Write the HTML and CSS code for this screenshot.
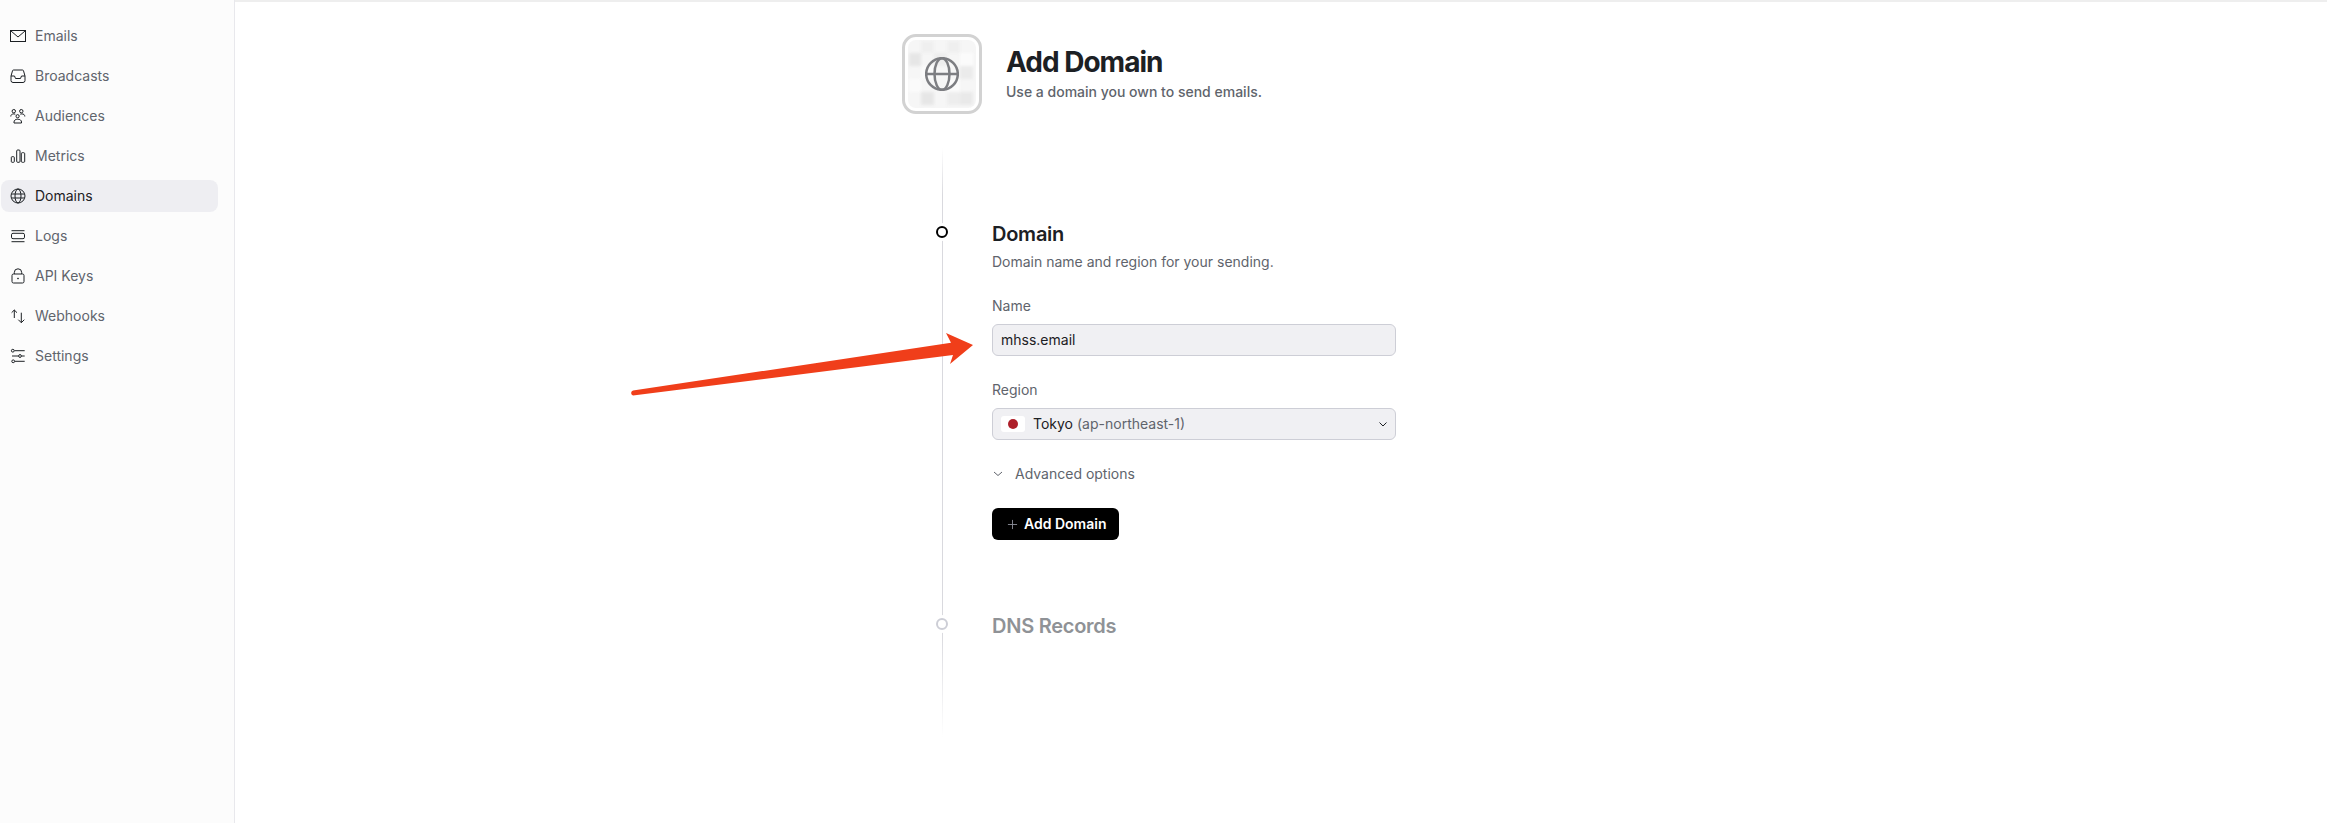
FILE: index.html
```html
<!DOCTYPE html>
<html lang="en">
<head>
<meta charset="utf-8">
<title>Add Domain</title>
<link rel="stylesheet" href="styles.css">
</head>
<body>
<div class="app">
  <aside class="sidebar">
    <nav class="nav">
      <a class="nav-item"><svg class="nav-icon" viewBox="0 0 16 16"><rect x=".5" y="2.500" width="15" height="11"/><path d="M1 3l7 6 7-6"/></svg>Emails</a>
      <a class="nav-item"><svg class="nav-icon" viewBox="0 0 16 16"><path d="M3.500 2h9a1 1 0 0 1 1 .8L15 8v4.500a2 2 0 0 1-2 2H3a2 2 0 0 1-2-2V8l1.500-5.200a1 1 0 0 1 1-.8Z"/><path d="M1 8h3.500l1 2.500h5l1-2.500H15"/></svg>Broadcasts</a>
      <a class="nav-item"><svg class="nav-icon" viewBox="0 0 16 16"><circle cx="3.800" cy="3.200" r="1.700"/><circle cx="11.300" cy="3.200" r="1.700"/><circle cx="7.600" cy="8.200" r="1.600"/><path d="M.8 8.500c0-1.800 1.300-2.600 3-2.600 .6 0 1.100.1 1.500.3M14.800 8.500c0-1.800-1.300-2.600-3-2.600-.6 0-1.100.1-1.500.3M4 15v-1c0-1.800 1.600-2.800 3.700-2.800s3.800 1 3.800 2.800v1Z"/></svg>Audiences</a>
      <a class="nav-item"><svg class="nav-icon" viewBox="0 0 16 16"><rect x="1.300" y="8.700" width="3" height="5.600" rx=".8"/><rect x="6.700" y="2" width="3.300" height="12.300" rx="1"/><rect x="11.300" y="4.700" width="3.400" height="9.600" rx="1"/></svg>Metrics</a>
      <a class="nav-item is-active"><svg class="nav-icon" viewBox="0 0 16 16"><circle cx="8" cy="8" r="7"/><ellipse cx="8" cy="8" rx="3" ry="7"/><path d="M1.500 6h13M1.500 10h13"/></svg>Domains</a>
      <a class="nav-item"><svg class="nav-icon" viewBox="0 0 16 16"><path d="M1.500 2.700h13M1.500 13.700h13"/><rect x="1.500" y="5.300" width="13" height="5.400" rx="1.500"/></svg>Logs</a>
      <a class="nav-item"><svg class="nav-icon" viewBox="0 0 16 16"><rect x="2" y="6" width="12" height="9" rx="1.500"/><path d="M4.300 6V4.500a3.700 3.700 0 0 1 7.400 0V6"/><circle cx="8" cy="10.500" r=".5"/></svg>API Keys</a>
      <a class="nav-item"><svg class="nav-icon" viewBox="0 0 16 16"><path d="M4.300 10V2M1.600 4.700 4.300 2 7 4.700M11.300 4.700v10M8.300 11.700l3 3 3-3"/></svg>Webhooks</a>
      <a class="nav-item"><svg class="nav-icon" viewBox="0 0 16 16"><circle cx="2.800" cy="2.700" r="1.400"/><circle cx="10" cy="8" r="1.400"/><circle cx="3.200" cy="13.300" r="1.400"/><path d="M4.500 2.700h10.200M2 8h6.300M11.700 8h3M5 13.300h9.700"/></svg>Settings</a>
    </nav>
  </aside>
  <main class="main">
    <div class="page">
      <header class="page-head">
        <div class="logo-box">
          <div class="logo-inner">
            <svg class="logo-check" viewBox="0 0 68 68" aria-hidden="true">
              <rect x="13" y="1" width="13" height="12" fill="#efefef"/><rect x="39" y="1" width="13" height="12" fill="#efefef"/>
              <rect x="1" y="13" width="12" height="13" fill="#e6e6e6"/><rect x="26" y="13" width="13" height="13" fill="#ededed"/><rect x="52" y="13" width="13" height="13" fill="#fbfbfb"/>
              <rect x="13" y="26" width="13" height="13" fill="#fbfbfb"/><rect x="52" y="26" width="13" height="13" fill="#ebebeb"/>
              <rect x="1" y="39" width="12" height="13" fill="#fbfbfb"/><rect x="39" y="39" width="13" height="13" fill="#fbfbfb"/>
              <rect x="13" y="52" width="13" height="13" fill="#e6e6e6"/><rect x="39" y="52" width="13" height="13" fill="#ededed"/><rect x="52" y="52" width="13" height="13" fill="#e9e9e9"/>
            </svg>
            <svg class="logo-globe" viewBox="0 0 34 34"><circle cx="17" cy="17" r="15.800"/><ellipse cx="17" cy="17" rx="7.500" ry="15.800"/><path d="M1 17h32"/></svg>
          </div>
        </div>
        <div class="page-title">
          <h1>Add Domain</h1>
          <p>Use a domain you own to send emails.</p>
        </div>
      </header>

      <div class="steps">
        <section class="step step-active">
          <span class="dot dot-active"></span>
          <h2>Domain</h2>
          <p class="step-desc">Domain name and region for your sending.</p>
          <div class="label">Name</div>
          <div class="field">mhss.email</div>
          <div class="label">Region</div>
          <div class="field field-select">
            <span class="flag"><span class="flag-sun"></span></span>
            <span>Tokyo</span>
            <span class="muted">(ap-northeast-1)</span>
            <svg class="chev chev-end" viewBox="0 0 12 12"><path d="M2.500 4.500 6 8l3.500-3.500"/></svg>
          </div>
          <div class="advanced">
            <svg class="chev" viewBox="0 0 12 12"><path d="M2 4l4 3.500L10 4"/></svg>
            Advanced options
          </div>
          <button class="btn" type="button"><svg class="plus" viewBox="0 0 12 12"><path d="M6 1v10M1 6h10"/></svg>Add Domain</button>
        </section>
        <section class="step step-next">
          <span class="dot"></span>
          <h2>DNS Records</h2>
        </section>
      </div>
    </div>
  </main>
</div>
<svg class="arrow" viewBox="0 0 2327 823" aria-hidden="true"><path d="M633 390.500 951 342.800 946 333 973 345 950 364 953 355 633 395.500A2.600 2.600 0 0 1 633 390.500Z"/></svg>
</body>
</html>
```
FILE: styles.css
```css
* { box-sizing: border-box; }
html, body { margin: 0; height: 100%; background: #fff; }
body {
  font-family: Inter, "Liberation Sans", sans-serif;
  font-size: 14px;
  color: #1c2024;
  overflow: hidden;
}
.app { display: flex; height: 823px; }

.sidebar {
  flex: 0 0 235px;
  background: #fcfcfc;
  border-right: 1px solid #e8e8ec;
  padding: 20px 16px 0 1px;
}
.nav { display: flex; flex-direction: column; gap: 8px; }
.nav-item {
  display: flex;
  align-items: center;
  gap: 9px;
  height: 32px;
  padding-left: 9px;
  border-radius: 8px;
  color: #60646c;
  line-height: 20px;
}
.nav-item.is-active { background: #eeeef2; color: #1c2024; }
.nav-icon {
  width: 16px;
  height: 16px;
  flex: none;
  fill: none;
  stroke: #1c2024;
  stroke-width: 1;
}

.main {
  flex: 1;
  border-top: 2px solid #eeeeee;
  padding: 32px 0 0 667px;
}
.page { width: 494px; }

.page-head { display: flex; align-items: center; gap: 24px; }
.logo-box {
  width: 80px;
  height: 80px;
  flex: none;
  padding: 3px;
  border: 3px solid #d2d2d2;
  border-radius: 14px;
  background: #fff;
}
.logo-inner {
  position: relative;
  width: 100%;
  height: 100%;
  border-radius: 8px;
  background: #f6f6f6;
  display: flex;
  align-items: center;
  justify-content: center;
  overflow: hidden;
}
.logo-check { position: absolute; inset: 0; width: 100%; height: 100%; filter: blur(1.5px); }
.logo-globe {
  position: relative;
  width: 34px;
  height: 34px;
  fill: none;
  stroke: #7d7e82;
  stroke-width: 2.500;
}
.page-title h1 {
  margin: 0 0 4px;
  font-size: 28px;
  line-height: 32px;
  font-weight: 700;
  letter-spacing: -1px;
}
.page-title p {
  margin: 0;
  font-weight: 500;
  line-height: 20px;
  color: #60646c;
}

.steps {
  position: relative;
  margin-top: 34px;
  margin-left: 90px;
  padding-top: 72px;
  width: 404px;
}
.steps::before {
  content: "";
  position: absolute;
  left: -50px;
  top: 0;
  width: 1px;
  height: 589px;
  background: linear-gradient(to bottom, #fff 0, #d9d9de 8%, #d9d9de 82%, #fff 100%);
}
.step { position: relative; }
.dot {
  position: absolute;
  left: -56px;
  top: 6px;
  width: 12px;
  height: 12px;
  border-radius: 50%;
  background: #fff;
  border: 2px solid #cdced6;
  box-shadow: 0 0 0 3px #fff;
}
.dot-active { border-color: #000; }
h2 {
  margin: 0;
  font-size: 20px;
  line-height: 28px;
  font-weight: 600;
  letter-spacing: -0.25px;
}
.step-desc { margin: 4px 0 0; line-height: 20px; color: #60646c; }
.label { margin: 24px 0 8px; line-height: 20px; color: #60646c; }
.field {
  display: flex;
  align-items: center;
  gap: 4px;
  height: 32px;
  padding: 0 6px 0 8px;
  background: #f0f0f3;
  border: 1px solid #cdced6;
  border-radius: 6px;
  line-height: 20px;
}
.flag {
  display: flex;
  align-items: center;
  justify-content: center;
  width: 24px;
  height: 16px;
  margin-right: 4px;
  background: #fff;
  border-radius: 3px;
}
.flag-sun { width: 10px; height: 10px; border-radius: 50%; background: #ae1f2a; }
.muted { color: #60646c; }
.chev {
  width: 12px;
  height: 12px;
  fill: none;
  stroke: #60646c;
  stroke-width: 1;
}
.chev-end { margin-left: auto; stroke: #1c2024; }
.advanced {
  display: flex;
  align-items: center;
  gap: 11px;
  margin-top: 24px;
  line-height: 20px;
  color: #60646c;
}
.btn {
  display: flex;
  align-items: center;
  gap: 6px;
  width: 127px;
  height: 32px;
  margin-top: 24px;
  padding: 0 0 0 15px;
  border: 0;
  border-radius: 6px;
  background: #000;
  color: #fff;
  font: 600 14px/20px Inter, "Liberation Sans", sans-serif;
}
.plus { width: 11px; height: 11px; fill: none; stroke: #8b8d98; stroke-width: 1; }
.step-next { margin-top: 72px; }
.step-next h2 { color: #8f9296; }

.arrow {
  position: absolute;
  left: 0;
  top: 0;
  width: 2327px;
  height: 823px;
  pointer-events: none;
  fill: #f03e1a;
}
```
